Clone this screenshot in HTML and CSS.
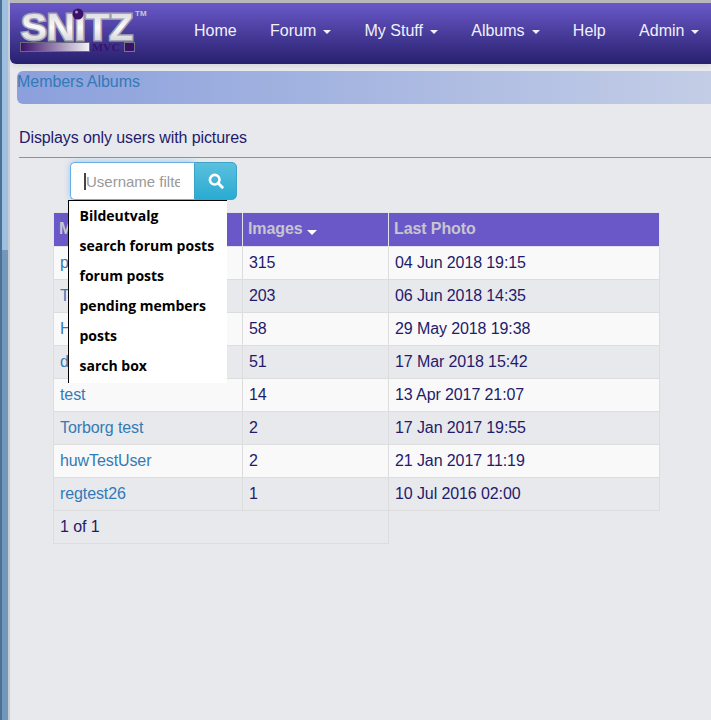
FILE: index.html
```html
<!DOCTYPE html>
<html lang="en">
<head>
<meta charset="utf-8">
<title>Members Albums</title>
<link rel="stylesheet" href="styles.css">
</head>
<body>
<div class="edge"></div>
<div class="page">
  <nav class="navbar">
    <div class="logo">
      <svg width="132" height="51" viewBox="0 0 132 51">
        <defs>
          <linearGradient id="bar" x1="0" x2="1" y1="0" y2="0">
            <stop offset="0" stop-color="#3a1068"/>
            <stop offset="1" stop-color="#f4f4f6"/>
          </linearGradient>
          <linearGradient id="metal" x1="0" x2="0" y1="0" y2="1">
            <stop offset="0" stop-color="#d2d2d8"/>
            <stop offset="0.5" stop-color="#fafafc"/>
            <stop offset="1" stop-color="#c0c0c8"/>
          </linearGradient>
        </defs>
        <text class="logo-word" x="4" y="32" textLength="112" lengthAdjust="spacingAndGlyphs">SNITZ</text>
        <circle cx="61" cy="6" r="5.500" fill="#3a1068"/>
        <circle cx="59.500" cy="4" r="1.500" fill="#a890c8"/>
        <rect x="3.500" y="34.500" width="69" height="9" fill="url(#bar)" stroke="#6a6a80"/>
        <text class="logo-mvc" x="75" y="43" textLength="28" lengthAdjust="spacingAndGlyphs">MVC</text>
        <rect x="107.500" y="34.500" width="10" height="9" fill="#3a1068" stroke="#77778a"/>
        <text class="logo-tm" x="118" y="8">TM</text>
      </svg>
    </div>
    <ul class="nav">
      <li>Home</li>
      <li>Forum<i class="caret"></i></li>
      <li>My Stuff<i class="caret"></i></li>
      <li>Albums<i class="caret"></i></li>
      <li>Help</li>
      <li>Admin<i class="caret"></i></li>
    </ul>
  </nav>

  <div class="crumb"><a href="#">Members Albums</a></div>

  <p class="lead">Displays only users with pictures</p>
  <hr class="rule">

  <div class="content">
    <div class="search">
      <div class="field"><span class="cursor"></span><span class="placeholder">Username filter</span></div>
      <button class="go" type="button" aria-label="Search">
        <svg width="16" height="16" viewBox="0 0 16 16"><circle cx="6.700" cy="6.700" r="4.800" fill="none" stroke="#fff" stroke-width="2.600"/><path d="M10 10l4.200 4.200" stroke="#fff" stroke-width="3" stroke-linecap="round"/></svg>
      </button>
      <ul class="suggest">
        <li>Bildeutvalg</li>
        <li>search forum posts</li>
        <li>forum posts</li>
        <li>pending members</li>
        <li>posts</li>
        <li>sarch box</li>
      </ul>
    </div>

    <table class="grid">
      <thead>
        <tr><th class="c1">Member</th><th class="c2">Images<i class="sort"></i></th><th class="c3">Last Photo</th></tr>
      </thead>
      <tbody>
        <tr><td><a href="#">pierre</a></td><td>315</td><td>04 Jun 2018 19:15</td></tr>
        <tr><td><a href="#">Torborg</a></td><td>203</td><td>06 Jun 2018 14:35</td></tr>
        <tr><td><a href="#">Huw</a></td><td>58</td><td>29 May 2018 19:38</td></tr>
        <tr><td><a href="#">demo</a></td><td>51</td><td>17 Mar 2018 15:42</td></tr>
        <tr><td><a href="#">test</a></td><td>14</td><td>13 Apr 2017 21:07</td></tr>
        <tr><td><a href="#">Torborg test</a></td><td>2</td><td>17 Jan 2017 19:55</td></tr>
        <tr><td><a href="#">huwTestUser</a></td><td>2</td><td>21 Jan 2017 11:19</td></tr>
        <tr><td><a href="#">regtest26</a></td><td>1</td><td>10 Jul 2016 02:00</td></tr>
      </tbody>
      <tfoot>
        <tr><td colspan="2">1 of 1</td></tr>
      </tfoot>
    </table>
  </div>
</div>
</body>
</html>
```

FILE: styles.css
```css
* { box-sizing: border-box; }

html, body { height: 100%; }

body {
  margin: 0;
  display: flex;
  overflow: hidden;
  background: #e8e9ed;
  color: #241a6b;
  font-family: "Liberation Sans", Arial, sans-serif;
  font-size: 16px;
  line-height: 1.4;
}

.edge {
  flex: 0 0 10px;
  border-left: 2px solid #4d7096;
  border-right: 2px solid #c9ccd4;
  background: linear-gradient(to bottom, #9cc0dd 0, #9cc0dd 250px, #7396bb 250px, #7396bb 100%);
}

.page {
  flex: 1;
  min-width: 0;
  overflow: hidden;
}

.navbar {
  display: flex;
  align-items: center;
  height: 64px;
  border-top: 3px solid #b8b8bc;
  border-radius: 0 0 0 6px;
  background: linear-gradient(to bottom, #6a58c8 0, #27206e 100%);
  box-shadow: 0 2px 4px rgba(0,0,0,.08);
}

.logo {
  flex: 0 0 168px;
  height: 51px;
  padding-left: 7px;
}

.logo svg { display: block; }

.logo-word {
  fill: url(#metal);
  stroke: #a2a2b0;
  stroke-width: 3;
  paint-order: stroke;
  font-family: "Liberation Sans", sans-serif;
  font-size: 36px;
  font-weight: 700;
}

.logo-mvc {
  fill: #3a1068;
  font-family: "Liberation Serif", serif;
  font-size: 10px;
  font-weight: 700;
}

.logo-tm {
  fill: #c8c8d0;
  font-family: "Liberation Sans", sans-serif;
  font-size: 8px;
  font-weight: 700;
}

.nav {
  display: flex;
  gap: 33.3px;
  margin: 0 0 4px 16px;
  padding: 0;
  list-style: none;
  color: #f1f1fa;
  white-space: nowrap;
}

.caret {
  display: inline-block;
  margin-left: 7px;
  vertical-align: middle;
  border-top: 4px solid #f1f1fa;
  border-left: 4px solid transparent;
  border-right: 4px solid transparent;
}

.crumb {
  height: 33px;
  margin: 7px 0 0 7px;
  border-radius: 6px 0 0 6px;
  background: linear-gradient(to right, #8ba0dc 0, #c3cde6 100%);
  letter-spacing: -.05px;
  line-height: 22px;
}

.crumb a, td a {
  color: #337ab7;
  text-decoration: none;
}

.lead {
  margin: 23px 0 0 9px;
  letter-spacing: -.1px;
  line-height: 22px;
}

.rule {
  margin: 8px 0 0 9px;
  border: 0;
  border-top: 1px solid #8f9098;
}

.content {
  padding: 4px 0 0 43px;
}

.search {
  position: relative;
  display: flex;
  width: 167px;
  height: 38px;
  margin-left: 17px;
}

.field {
  display: flex;
  align-items: center;
  flex: 1;
  min-width: 0;
  overflow: hidden;
  padding: 0 14px 0 13px;
  border: 1px solid #66afe9;
  border-right: 0;
  border-radius: 5px 0 0 5px;
  background: #fff;
  box-shadow: 0 0 6px rgba(102,175,233,.6);
}

.cursor {
  flex: 0 0 2px;
  height: 17px;
  background: #444;
}

.placeholder {
  overflow: hidden;
  color: #999;
  font-size: 15px;
  white-space: nowrap;
}

.go {
  flex: 0 0 43px;
  padding: 0;
  border: 1px solid #3ba4c8;
  border-radius: 0 5px 5px 0;
  background: linear-gradient(to bottom, #5bc0de 0, #2aabd2 100%);
}

.go svg { display: block; margin: auto; }

.suggest {
  position: absolute;
  left: -2px;
  top: 38px;
  z-index: 2;
  width: 159px;
  height: 183px;
  margin: 0;
  padding: 0;
  list-style: none;
  border-top: 1px solid #000;
  border-left: 1px solid #000;
  background: #fff;
  color: #000;
  font-family: "Open Sans", sans-serif;
  font-size: 14px;
  font-weight: 700;
}

.suggest li {
  height: 30px;
  padding-left: 10.5px;
  line-height: 30px;
}

.grid {
  width: 607px;
  margin-top: 12px;
  table-layout: fixed;
  border-collapse: collapse;
  letter-spacing: -.1px;
}

.grid th, .grid td {
  height: 33px;
  padding: 0 6px;
  border: 1px solid #dddddd;
  text-align: left;
  font-weight: 400;
}

.grid th {
  height: 34px;
  padding-left: 5px;
  border-color: #e3e3ea;
  background: #6a58c8;
  color: #c6c6cc;
  font-weight: 700;
}

.c1 { width: 189px; }
.c2 { width: 146px; }

tbody tr:nth-child(odd) td { background: #f9f9f9; }

.sort {
  display: inline-block;
  margin-left: 4px;
  vertical-align: -1px;
  border-top: 5px solid #fff;
  border-left: 5px solid transparent;
  border-right: 5px solid transparent;
}
```
